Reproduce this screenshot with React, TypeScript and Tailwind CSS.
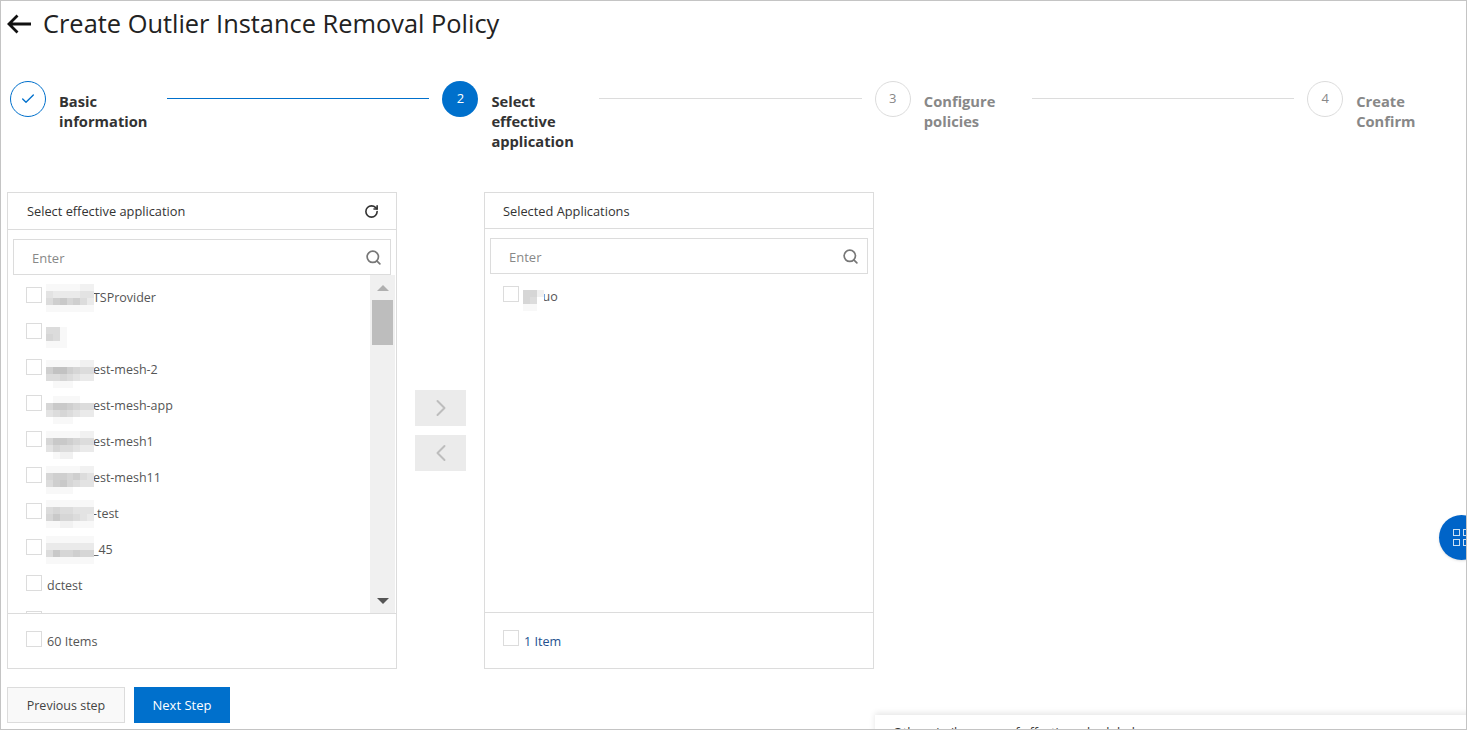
import { Check, ChevronLeft, ChevronRight, RotateCw, Search } from "lucide-react";

const font = "font-['Open_Sans','Noto_Sans',sans-serif]";

const steps = [
  { n: "1", label: ["Basic", "information"], state: "done" },
  { n: "2", label: ["Select", "effective", "application"], state: "active" },
  { n: "3", label: ["Configure", "policies"], state: "todo" },
  { n: "4", label: ["Create", "Confirm"], state: "todo" },
];

const grays = ["#ffffff", "#f8f8f8", "#f1f1f1", "#eaeaea", "#e3e3e3", "#dcdcdc", "#d6d6d6", "#cfcfcf", "#c9c9c9", "#c2c2c2"];

// pixelated patch that hides part of an app name, one string per row
function Mosaic({ rows, shift = "" }: { rows: string[]; shift?: string }) {
  return (
    <span className={`relative z-10 flex shrink-0 flex-col ${shift}`}>
      {rows.map((r, y) => (
        <span key={y} className="flex">
          {r.split("").map((c, x) => (
            <span key={x} className="h-[7px]" style={{ width: 48 / 7, backgroundColor: grays[Number(c)] }} />
          ))}
        </span>
      ))}
    </span>
  );
}

function Checkbox() {
  return <span className="block h-4 w-4 shrink-0 border border-[#dcdcdc] bg-white" />;
}

function Row({ text, rows, shift }: { text?: string; rows?: string[]; shift?: string }) {
  return (
    <div className="flex h-9 items-center pl-[18px]">
      <span className="-mt-[5px]">
        <Checkbox />
      </span>
      <div className="ml-[4px] flex items-center pt-[2px] text-[12.5px] text-[#555]">
        {rows ? <Mosaic rows={rows} shift={shift} /> : <span className="w-[1px]" />}
        {text ? <span className={rows ? "-ml-[1px] whitespace-nowrap" : "whitespace-nowrap"}>{text}</span> : null}
      </div>
    </div>
  );
}

function SearchBox() {
  return (
    <div className="mx-[5px] flex h-9 items-center justify-between border border-[#dcdcdc] bg-white pl-[18px] pr-[8px]">
      <span className="pt-[3px] text-[13px] text-[#888]">Enter</span>
      <Search className="h-[17px] w-[17px] text-[#777]" strokeWidth={2.4} />
    </div>
  );
}

export default function App() {
  return (
    <div className={`relative h-[730px] w-[1467px] overflow-hidden border border-[#c4c4c4] bg-white ${font}`}>
      <div className="flex h-[48px] items-center pb-[3px] pl-[6px]">
        <svg viewBox="0 0 24 20" className="h-[20px] w-[24px] text-[#111]" fill="none" stroke="currentColor" strokeWidth="2.8">
          <path d="M10.5 1.5 L2 10 L10.5 18.5 M2 10 H24" />
        </svg>
        <h1 className="ml-[12px] text-[25.4px] font-normal leading-none text-[#222]">Create Outlier Instance Removal Policy</h1>
      </div>

      <div className="mt-[32px] flex h-[111px] pl-[9px]">
        {steps.map((s, i) => (
          <div key={s.n} className="flex w-[432.4px] shrink-0 items-start">
            <div
              className={
                s.state === "done"
                  ? "flex h-[36px] w-[36px] shrink-0 items-center justify-center rounded-full border border-[#0070cc] bg-white text-[#0070cc]"
                  : s.state === "active"
                    ? "flex h-[36px] w-[36px] shrink-0 items-center justify-center rounded-full bg-[#0070cc] text-[13px] text-white"
                    : "flex h-[36px] w-[36px] shrink-0 items-center justify-center rounded-full border border-[#dcdcdc] bg-white text-[13px] text-[#888]"
              }
            >
              {s.state === "done" ? <Check className="h-4 w-4" strokeWidth={2} /> : s.n}
            </div>
            <div
              className={
                s.state === "todo"
                  ? "ml-[13px] mt-[10px] w-[96px] shrink-0 text-[14.7px] font-bold leading-[20px] text-[#888]"
                  : "ml-[13px] mt-[10px] w-[96px] shrink-0 text-[14.7px] font-bold leading-[20px] text-[#333]"
              }
            >
              {s.label.map((l) => (
                <div key={l} className="whitespace-nowrap">
                  {l}
                </div>
              ))}
            </div>
            {i < 3 ? (
              <div
                className={
                  i === 0
                    ? "ml-[12px] mr-[13px] mt-[17px] h-px flex-1 bg-[#0070cc]"
                    : "ml-[12px] mr-[13px] mt-[17px] h-px flex-1 bg-[#dcdcdc]"
                }
              />
            ) : null}
          </div>
        ))}
      </div>

      <div className="flex items-start pl-[6px]">
        <div className="flex h-[477px] w-[390px] flex-col border border-[#dcdcdc]">
          <div className="flex h-[37px] shrink-0 items-center justify-between border-b border-[#dcdcdc] pl-[19px] pr-[17px]">
            <span className="pt-[2px] text-[12.8px] text-[#333]">Select effective application</span>
            <RotateCw className="h-[15px] w-[15px] text-[#333]" strokeWidth={2.6} />
          </div>
          <div className="shrink-0 pt-[9px]">
            <SearchBox />
          </div>
          <div className="flex min-h-0 flex-1">
            <div className="h-full flex-1 overflow-hidden pt-[4px]">
              <Row text="TSProvider" rows={["1111122", "4333344", "5786753", "1111111"]} />
              <Row rows={["000", "551", "651", "111"]} />
              <Row text="est-mesh-2" rows={["1111122", "7997655", "5565433", "0111000"]} shift="mt-[8px]" />
              <Row text="est-mesh-app" rows={["0111100", "6887655", "4565433", "0111000"]} shift="mt-[7px]" />
              <Row text="est-mesh1" rows={["1111122", "6887655", "4655433", "0122000"]} shift="mt-[5px]" />
              <Row text="est-mesh11" rows={["1111122", "6776754", "5786544", "1111000"]} shift="mt-[3px]" />
              <Row text="-test" rows={["1111111", "5655444", "6866543", "1122111"]} />
              <Row text="_45" rows={["1111111", "3333333", "5866766", "1111111"]} />
              <Row text="dctest" />
              <Row />
            </div>
            <div className="mr-px flex h-full w-[25px] shrink-0 flex-col items-center bg-[#f0f0f0]">
              <span className="mt-[10px] h-0 w-0 border-x-[6px] border-b-[6px] border-x-transparent border-b-[#b0b0b0]" />
              <span className="mt-[9px] h-[45px] w-[21px] bg-[#bdbdbd]" />
              <span className="mb-[9px] mt-auto h-0 w-0 border-x-[6px] border-t-[6px] border-x-transparent border-t-[#555]" />
            </div>
          </div>
          <div className="flex h-[55px] shrink-0 items-center border-t border-[#dcdcdc] pl-[18px]">
            <span className="-mt-[5px]">
              <Checkbox />
            </span>
            <span className="ml-[5px] pt-[2px] text-[12.6px] text-[#555]">60 Items</span>
          </div>
        </div>

        <div className="mt-[198px] flex w-[87px] flex-col items-center gap-[9px]">
          <div className="flex h-9 w-[51px] items-center justify-center bg-[#ebebeb] text-[#bdbdbd]">
            <ChevronRight className="h-[28px] w-[28px]" strokeWidth={1.7} />
          </div>
          <div className="flex h-9 w-[51px] items-center justify-center bg-[#ebebeb] text-[#bdbdbd]">
            <ChevronLeft className="h-[28px] w-[28px]" strokeWidth={1.7} />
          </div>
        </div>

        <div className="flex h-[477px] w-[390px] flex-col border border-[#dcdcdc]">
          <div className="flex h-[36px] shrink-0 items-center border-b border-[#dcdcdc] pl-[18px]">
            <span className="pt-[2px] text-[12.8px] text-[#333]">Selected Applications</span>
          </div>
          <div className="shrink-0 pt-[9px]">
            <SearchBox />
          </div>
          <div className="min-h-0 flex-1 pt-[4px]">
            <Row text="uo" rows={["000", "662", "650", "110"]} />
          </div>
          <div className="flex h-[56px] shrink-0 items-center border-t border-[#dcdcdc] pl-[18px]">
            <span className="-mt-[5px]">
              <Checkbox />
            </span>
            <span className="ml-[5px] pt-[3px] text-[12.6px] text-[#24508f]">1 Item</span>
          </div>
        </div>
      </div>

      <div className="mt-[18px] flex gap-[9px] pl-[6px]">
        <button className="h-9 w-[118px] border border-[#dcdcdc] bg-[#f9f9f9] pt-[2px] text-[12.5px] text-[#444]">Previous step</button>
        <button className="h-9 w-[96px] bg-[#0070cc] pt-[2px] text-[13px] text-white">Next Step</button>
      </div>

      {/* floating things pinned to the window edge */}
      <div className="absolute left-[1438px] top-[514px] flex h-[45px] w-[45px] items-center justify-center rounded-full bg-[#0064c8] shadow">
        <div className="grid shrink-0 grid-cols-2 gap-[3px]">
          <span className="h-[7px] w-[7px] border border-white/80" />
          <span className="h-[7px] w-[7px] border border-white/80" />
          <span className="h-[7px] w-[7px] border border-white/80" />
          <span className="h-[7px] w-[7px] border border-white/80" />
        </div>
      </div>
      <div className="absolute left-[874px] top-[714px] h-[40px] w-[600px] bg-white pl-[18px] pt-[9px] text-[12.5px] text-[#333] shadow-[0_-2px_6px_rgba(0,0,0,0.1)]">
        Other similar cases of effective scheduled
      </div>
    </div>
  );
}
